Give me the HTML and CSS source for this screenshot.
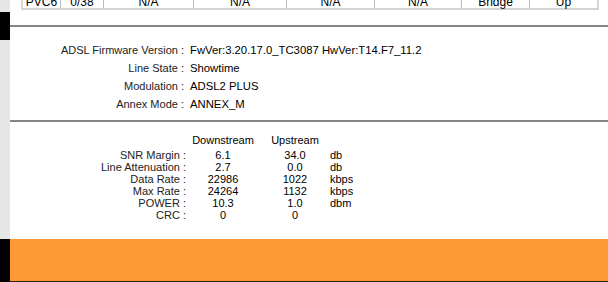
FILE: index.html
```html
<!DOCTYPE html>
<html lang="en">
<head>
    <meta charset="UTF-8">
    <title>ADSL Status</title>
    <link rel="stylesheet" href="styles.css">
</head>
<body>
    <div class="page">
        <div class="side">
            <div class="side-gap"></div>
            <div class="side-mark"></div>
            <div class="side-fill"></div>
            <div class="side-foot"></div>
        </div>

        <div class="main">
            <div class="pvc-clip">
                <table class="pvc">
                    <tr>
                        <td class="c1">PVC6</td>
                        <td class="c2">0/38</td>
                        <td class="c3">N/A</td>
                        <td class="c4">N/A</td>
                        <td class="c5">N/A</td>
                        <td class="c6">N/A</td>
                        <td class="c7">Bridge</td>
                        <td class="c8">Up</td>
                    </tr>
                </table>
            </div>

            <div class="rule"></div>

            <div class="info">
                <div class="info-label">ADSL Firmware Version :</div>
                <div class="info-value">FwVer:3.20.17.0_TC3087 HwVer:T14.F7_11.2</div>
                <div class="info-label">Line State :</div>
                <div class="info-value">Showtime</div>
                <div class="info-label">Modulation :</div>
                <div class="info-value">ADSL2 PLUS</div>
                <div class="info-label">Annex Mode :</div>
                <div class="info-value">ANNEX_M</div>
            </div>

            <div class="rule"></div>

            <div class="stats">
                <div class="head"></div>
                <div class="head num">Downstream</div>
                <div class="head num">Upstream</div>
                <div class="head"></div>

                <div class="lbl">SNR Margin :</div>
                <div class="num">6.1</div>
                <div class="num">34.0</div>
                <div class="unit">db</div>

                <div class="lbl">Line Attenuation :</div>
                <div class="num">2.7</div>
                <div class="num">0.0</div>
                <div class="unit">db</div>

                <div class="lbl">Data Rate :</div>
                <div class="num">22986</div>
                <div class="num">1022</div>
                <div class="unit">kbps</div>

                <div class="lbl">Max Rate :</div>
                <div class="num">24264</div>
                <div class="num">1132</div>
                <div class="unit">kbps</div>

                <div class="lbl">POWER :</div>
                <div class="num">10.3</div>
                <div class="num">1.0</div>
                <div class="unit">dbm</div>

                <div class="lbl">CRC :</div>
                <div class="num">0</div>
                <div class="num">0</div>
                <div class="unit"></div>
            </div>

            <div class="footer"></div>
        </div>
    </div>
</body>
</html>
```

FILE: styles.css
```css
body {
    margin: 0;
    padding: 0;
    background-color: #fff;
    color: #000;
    font-family: "Liberation Sans", Arial, sans-serif;
    font-size: 11px;
}

.page {
    display: flex;
    height: 282px;
    overflow: hidden;
}

/* left frame strip */
.side {
    width: 10px;
    display: flex;
    flex-direction: column;
    background-color: #e6e6e6;
}
.side-gap {
    height: 12px;
}
.side-mark {
    height: 28px;
    background-color: #000;
}
.side-fill {
    flex: 1;
}
.side-foot {
    height: 43px;
    background-color: #000;
}

.main {
    flex: 1;
    display: flex;
    flex-direction: column;
}

/* PVC table, only its last row is visible */
.pvc-clip {
    height: 10px;
    overflow: hidden;
    display: flex;
    align-items: flex-end;
    padding-left: 11px;
}
.pvc {
    border-collapse: collapse;
    width: 578px;
    table-layout: fixed;
    font-size: 12px;
    border-bottom: 2px solid #d4d4d4;
    border-left: 2px solid #d4d4d4;
    border-right: 2px solid #d4d4d4;
}
.pvc td {
    border-left: 1px solid #bdbdbd;
    text-align: center;
    height: 12px;
    padding: 0;
    line-height: 12px;
}
.pvc td:first-child {
    border-left: none;
}
.pvc .c1 { width: 37px; }
.pvc .c2 { width: 42px; }
.pvc .c3 { width: 89px; }
.pvc .c4 { width: 92px; }
.pvc .c5 { width: 87px; }
.pvc .c6 { width: 86px; }
.pvc .c7 { width: 67px; }

.rule {
    height: 2px;
    background-color: #858585;
    margin-top: 15px;
}

.info {
    display: grid;
    grid-template-columns: 174px auto;
    column-gap: 6px;
    padding-top: 14px;
}
.info-label,
.info-value {
    line-height: 18px;
}
.info-label {
    text-align: right;
    color: #222;
    font-size: 11px;
}
.info-value {
    font-size: 11.3px;
}

.info + .rule {
    margin-top: 7px;
}

.stats {
    display: grid;
    grid-template-columns: 176px 74px 70px 60px;
    padding-top: 12px;
    line-height: 12px;
}
.stats .head {
    margin-bottom: 3px;
}
.lbl {
    text-align: right;
    color: #222;
}
.num {
    text-align: center;
}

.footer {
    margin-top: auto;
    height: 42px;
    background-color: #fd9a36;
    border-bottom: 1px solid #2e2010;
}
```
